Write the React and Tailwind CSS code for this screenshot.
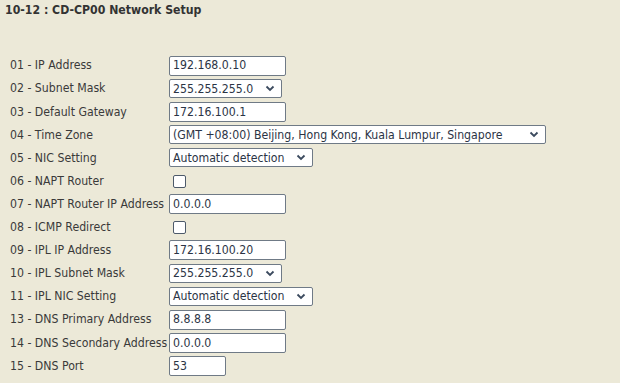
const font = { fontFamily: '"DejaVu Sans Condensed", "DejaVu Sans", sans-serif' };

const rows = [
  { label: '01 - IP Address', type: 'text', value: '192.168.0.10', w: 'w-[117px]' },
  { label: '02 - Subnet Mask', type: 'select', value: '255.255.255.0', w: 'w-[113px]' },
  { label: '03 - Default Gateway', type: 'text', value: '172.16.100.1', w: 'w-[117px]' },
  { label: '04 - Time Zone', type: 'select', value: '(GMT +08:00) Beijing, Hong Kong, Kuala Lumpur, Singapore', w: 'w-[377px]' },
  { label: '05 - NIC Setting', type: 'select', value: 'Automatic detection', w: 'w-[144px]' },
  { label: '06 - NAPT Router', type: 'check' },
  { label: '07 - NAPT Router IP Address', type: 'text', value: '0.0.0.0', w: 'w-[117px]' },
  { label: '08 - ICMP Redirect', type: 'check' },
  { label: '09 - IPL IP Address', type: 'text', value: '172.16.100.20', w: 'w-[117px]' },
  { label: '10 - IPL Subnet Mask', type: 'select', value: '255.255.255.0', w: 'w-[113px]' },
  { label: '11 - IPL NIC Setting', type: 'select', value: 'Automatic detection', w: 'w-[144px]' },
  { label: '13 - DNS Primary Address', type: 'text', value: '8.8.8.8', w: 'w-[117px]' },
  { label: '14 - DNS Secondary Address', type: 'text', value: '0.0.0.0', w: 'w-[117px]' },
  { label: '15 - DNS Port', type: 'text', value: '53', w: 'w-[57px]' },
];

function Chevron() {
  return (
    <svg width="10" height="7" viewBox="0 0 10 7" className="shrink-0">
      <path d="M1.5 1.5 L5 5 L8.5 1.5" fill="none" stroke="#3b4a5e" strokeWidth="1.8" />
    </svg>
  );
}

function Field({ row }) {
  if (row.type === 'check') {
    return <div className="ml-[4px] w-[13px] h-[13px] rounded-[2px] border border-[#4d5a6a] bg-white" />;
  }
  if (row.type === 'select') {
    return (
      <div className={`${row.w} h-[19px] flex items-center justify-between pl-[3px] pr-[6px] border border-[#6f7a86] rounded-[2px] bg-white text-[#2b3445]`}>
        <span className="whitespace-nowrap">{row.value}</span>
        <Chevron />
      </div>
    );
  }
  return (
    <div className={`${row.w} h-[20px] flex items-center pl-[3px] border border-[#6f7a86] rounded-[2px] bg-white text-[#2b3445]`}>
      {row.value}
    </div>
  );
}

export default function App() {
  return (
    <div className="w-[620px] h-[383px] bg-[#ece9d8] text-[12.2px] text-[#3a3a3a] overflow-hidden" style={font}>
      <div className="px-[5px] pt-[1px] h-[20px] font-bold text-[#333]">10-12 : CD-CP00 Network Setup</div>
      <div className="pt-[34px] pl-[10px] flex flex-col">
        {rows.map((row) => (
          <div key={row.label} className="h-[23.1px] flex items-center">
            <div className="min-w-[159px] pr-[1px] whitespace-nowrap">{row.label}</div>
            <Field row={row} />
          </div>
        ))}
      </div>
    </div>
  );
}
